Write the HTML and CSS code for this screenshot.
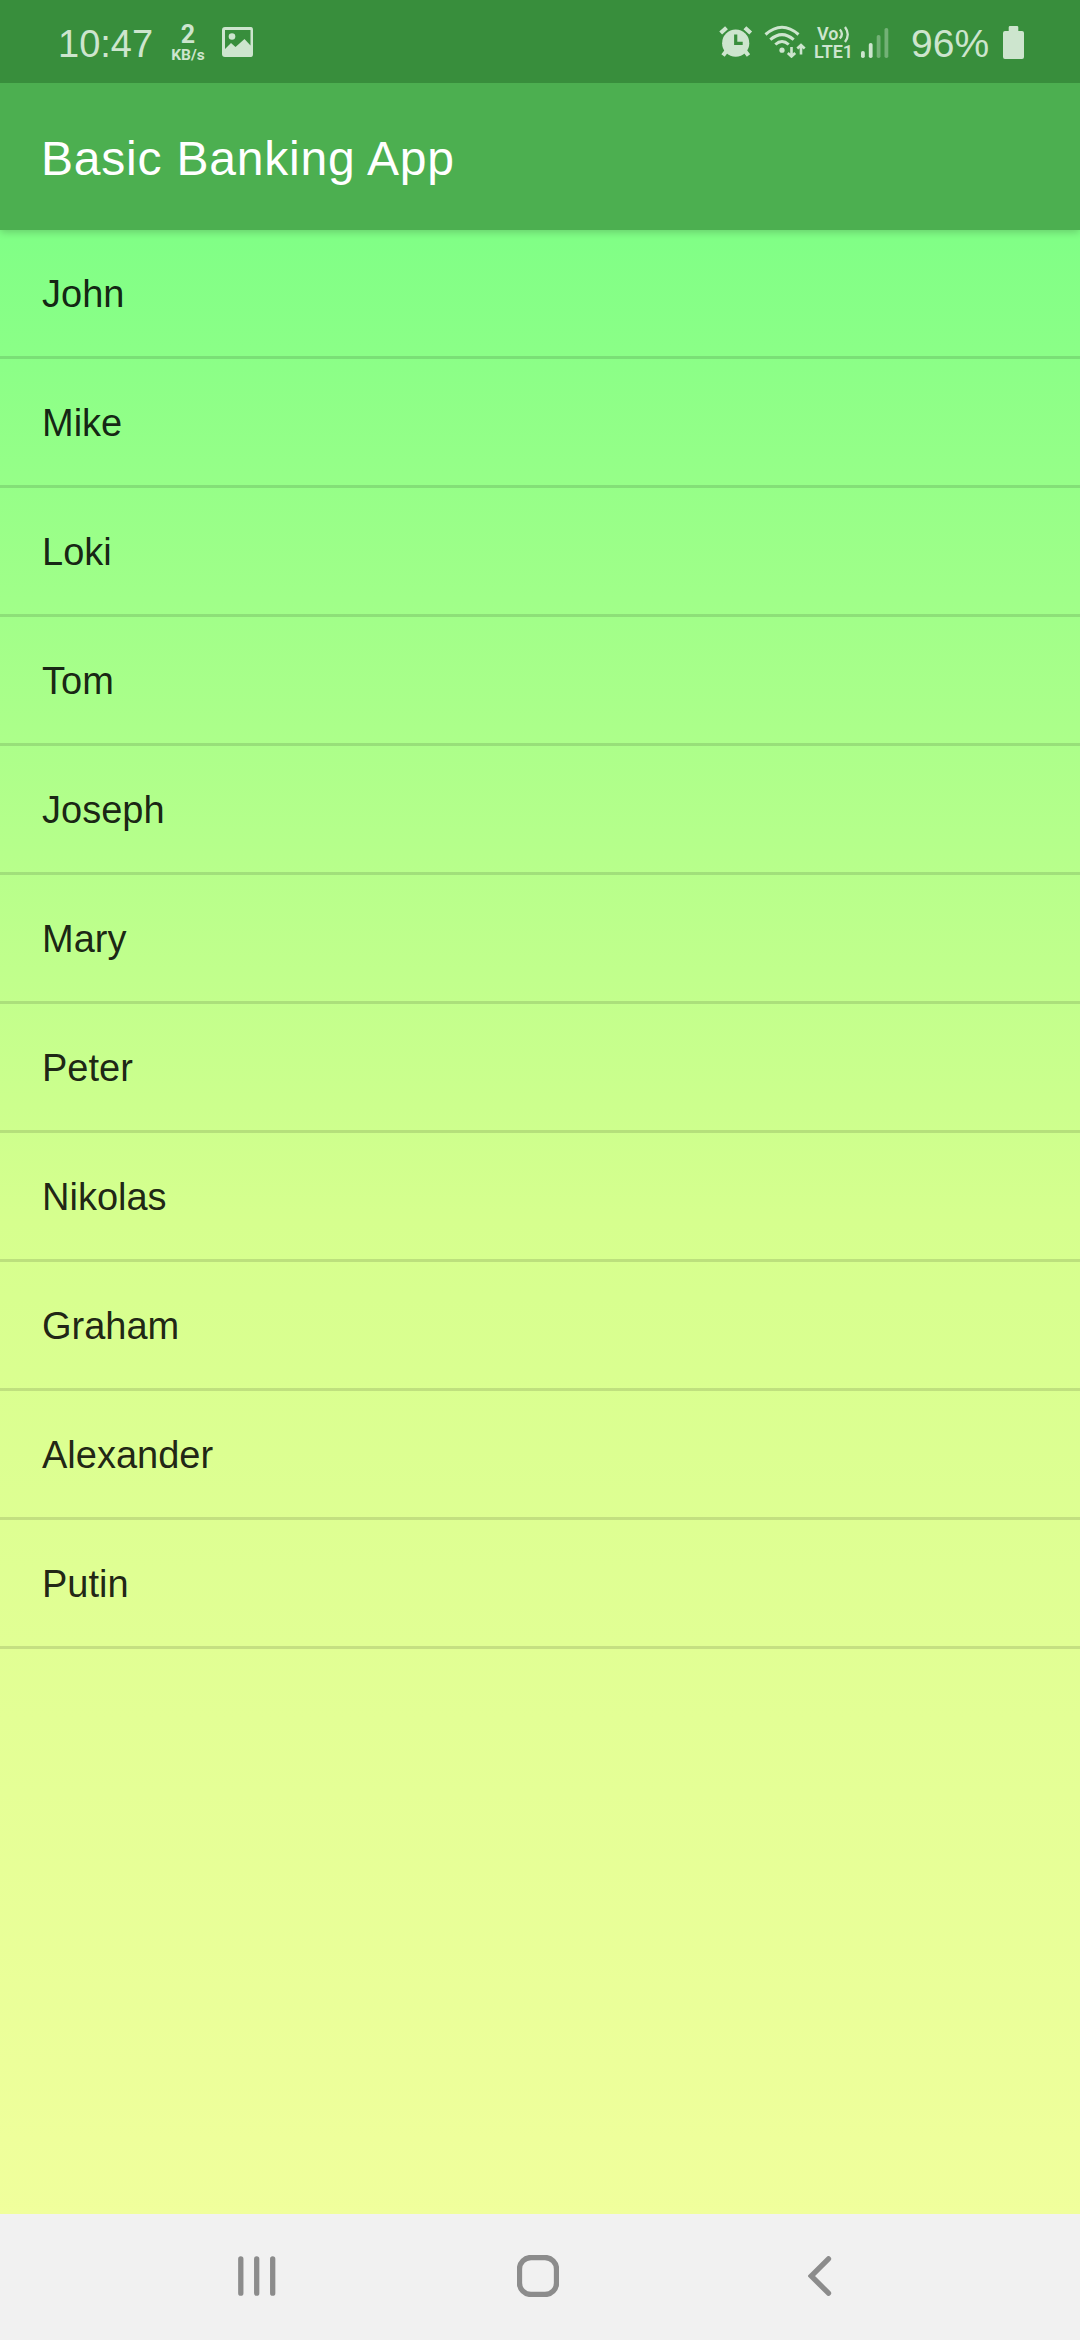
FILE: index.html
```html
<!DOCTYPE html>
<html lang="en">
<head>
<meta charset="utf-8">
<title>Basic Banking App</title>
<link rel="stylesheet" href="styles.css">
</head>
<body>
<div class="status">
  <span class="clock">10:47</span>
  <span class="speed"><b class="rate">2</b><span class="unit">KB/s</span></span>
  <svg class="picture" width="32" height="31" viewBox="0 0 32 31">
    <path fill-rule="evenodd" d="M3 0H29Q31 0 31 3V27Q31 30 29 30H3Q0 30 0 27V3Q0 0 3 0ZM3 3V22L9 16L13.500 20L22.500 12L28.500 18.500V3Z"/>
    <circle cx="10" cy="9.500" r="3.300"/>
  </svg>
  <span class="spacer"></span>
  <svg class="alarm" width="34" height="32" viewBox="0 0 34 32">
    <circle cx="16.700" cy="17.200" r="13.600"/>
    <path class="line" d="M1.700 7L7.500 1.700M31.700 7L25.900 1.700M7.500 25L4 29.500M26 25L29.500 29.500"/>
    <path class="cut" d="M16.700 8.500V17.300H23.700"/>
  </svg>
  <svg class="wifi" width="42" height="33" viewBox="0 0 42 33">
    <path class="arc" d="M1.500 9.500Q18 -5 34.500 9.500M6.300 14.700Q18 4.500 29.700 14.700M11.300 19.500Q18 13.500 24.700 19.500"/>
    <circle cx="18" cy="25.200" r="2.600"/>
    <path class="arrow" d="M27.500 22V31.500M23.800 28L27.500 31.500L31.200 28M37 29.500V20M33.300 23.500L37 20L40.700 23.500"/>
  </svg>
  <span class="lte"><span class="volte">Vo<svg width="12" height="18" viewBox="0 0 12 18"><path class="wave" d="M1.800 4.500Q6 9 1.800 13.500M7 2Q12.500 9.500 7 17"/></svg></span><span class="net">LTE1</span></span>
  <svg class="signal" width="28" height="31" viewBox="0 0 28 31">
    <rect x="0" y="23" width="3.800" height="7" rx="1.800"/>
    <rect x="7.800" y="15" width="3.800" height="15" rx="1.800"/>
    <rect class="dim" x="15.700" y="7" width="3.800" height="23" rx="1.800"/>
    <rect class="dim" x="23.500" y="0" width="3.800" height="30" rx="1.800"/>
  </svg>
  <span class="percent">96%</span>
  <svg class="battery" width="21" height="33" viewBox="0 0 21 33">
    <path d="M7 0H14Q15.300 0 15.300 1.300V5H19Q21 5 21 7V31Q21 33 19 33H2Q0 33 0 31V7Q0 5 2 5H5.700V1.300Q5.700 0 7 0Z"/>
  </svg>
</div>
<header class="appbar"><h1>Basic Banking App</h1></header>
<main class="content">
  <ul class="customers">
    <li>John</li>
    <li>Mike</li>
    <li>Loki</li>
    <li>Tom</li>
    <li>Joseph</li>
    <li>Mary</li>
    <li>Peter</li>
    <li>Nikolas</li>
    <li>Graham</li>
    <li>Alexander</li>
    <li>Putin</li>
  </ul>
</main>
<nav class="navbar">
  <svg class="recents" width="38" height="40" viewBox="0 0 38 40"><path d="M2.800 2.800V37.200M18.700 2.800V37.200M34.700 2.800V37.200"/></svg>
  <svg class="home" width="42" height="42" viewBox="0 0 42 42"><rect x="2.500" y="2.500" width="37" height="37" rx="11.500"/></svg>
  <svg class="back" width="24" height="40" viewBox="0 0 24 40"><path d="M20.500 2.800L3.200 20L20.500 37.200"/></svg>
</nav>
</body>
</html>
```
FILE: styles.css
```css
* { box-sizing: border-box; }
body {
  margin: 0;
  width: 1080px;
  height: 2340px;
  display: flex;
  flex-direction: column;
  overflow: hidden;
  font-family: "Liberation Sans", Arial, sans-serif;
}
svg { display: block; flex: none; }

.status {
  height: 83px;
  flex: none;
  display: flex;
  align-items: flex-start;
  position: relative;
  z-index: 2;
  background: #388e3c;
  color: #cde5ce;
  fill: #cde5ce;
  padding: 0 56px 0 58px;
}
.clock, .percent { font-size: 38px; line-height: 44px; padding-top: 22px; }
.clock { width: 95px; }
.speed {
  display: flex;
  flex-direction: column;
  align-items: center;
  width: 36px;
  margin-left: 17px;
  padding-top: 22px;
  font-family: Roboto, sans-serif;
}
.rate { font-size: 25px; line-height: 26px; font-weight: 700; }
.unit { font-size: 15.5px; line-height: 14px; font-weight: 700; }
.picture { margin: 27px 0 0 16px; }
.spacer { flex: 1; }
.alarm { margin-top: 26px; }
.alarm .line { fill: none; stroke: #cde5ce; stroke-width: 4.2; }
.alarm .cut { fill: none; stroke: #388e3c; stroke-width: 3.2; }
.wifi { margin: 25px 0 0 11px; }
.wifi .arc, .wifi .arrow, .wave { fill: none; stroke: #cde5ce; stroke-width: 3; }
.wifi .arrow { stroke-width: 2.6; }
.lte {
  width: 40px;
  margin-left: 8px;
  padding-top: 25px;
  font-family: Roboto, sans-serif;
  font-weight: 600;
}
.volte { display: flex; font-size: 18px; line-height: 18px; height: 18px; padding-left: 3px; }
.volte .wave { stroke-width: 2.3; }
.net { display: block; font-size: 18px; line-height: 18px; }
.signal { margin: 28px 0 0 7px; }
.signal .dim { opacity: .4; }
.percent { width: 78px; margin-left: 22px; font-size: 39px; }
.battery { margin: 26px 0 0 14px; }

.appbar {
  height: 147px;
  flex: none;
  display: flex;
  align-items: center;
  padding: 4px 41px 0;
  background: #4caf50;
  color: #fff;
  position: relative;
  box-shadow: 0 2px 8px rgba(0, 0, 0, .2);
}
.appbar h1 { margin: 0; font-size: 48px; line-height: 54px; font-weight: 400; letter-spacing: .8px; }

.content {
  flex: 1;
  background: linear-gradient(#80ff86, #d6ff8e 50%, #f0ff9c);
}
.customers { list-style: none; margin: 0; padding: 0; }
.customers li {
  height: 129px;
  padding: 42px 42px 0;
  font-size: 38px;
  line-height: 44px;
  color: rgba(0, 0, 0, .87);
  border-bottom: 3px solid rgba(0, 0, 0, .12);
}

.navbar {
  height: 126px;
  flex: none;
  display: flex;
  align-items: center;
  padding: 0 248px 2px 238px;
  justify-content: space-between;
  background: #f1f1f1;
}
.navbar svg { fill: none; stroke: #8c8c8c; stroke-width: 5.3; stroke-linecap: round; }
.navbar .home { margin-right: 8px; }
```
